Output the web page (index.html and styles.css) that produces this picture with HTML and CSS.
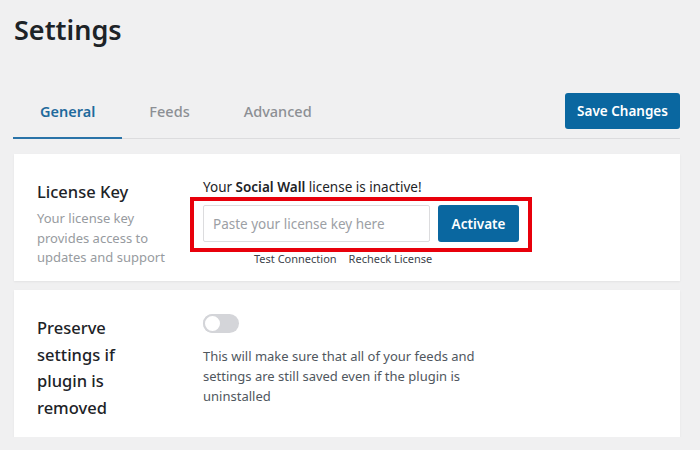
FILE: index.html
```html
<!DOCTYPE html>
<html>
<head>
<meta charset="utf-8">
<link rel="stylesheet" href="styles.css">
</head>
<body>
<div class="page">
  <h1 class="title">Settings</h1>
  <div class="tabbar">
    <nav class="tabs">
      <a class="tab active">General</a>
      <a class="tab">Feeds</a>
      <a class="tab">Advanced</a>
    </nav>
    <button class="btn save">Save Changes</button>
  </div>

  <section class="card card-license">
    <div class="label">
      <h2 class="label-title">License Key</h2>
      <p class="label-desc">Your license key provides access to updates and support</p>
    </div>
    <div class="field">
      <p class="status">Your <b>Social Wall</b> license is inactive!</p>
      <div class="highlight">
        <input class="key-input" type="text" placeholder="Paste your license key here">
        <button class="btn activate">Activate</button>
      </div>
      <div class="links">
        <a class="link">Test Connection</a>
        <a class="link">Recheck License</a>
      </div>
    </div>
  </section>

  <section class="card card-preserve">
    <div class="label">
      <h2 class="label-title tall">Preserve settings if plugin is removed</h2>
    </div>
    <div class="field">
      <span class="toggle"><span class="knob"></span></span>
      <p class="help">This will make sure that all of your feeds and settings are still saved even if the plugin is uninstalled</p>
    </div>
  </section>
</div>
</body>
</html>
```

FILE: styles.css
```css
html, body {
  margin: 0;
  padding: 0;
  background: #f0f0f1;
}
body {
  font-family: "Noto Sans", "Open Sans", sans-serif;
  color: #1d2327;
}
.page {
  padding: 0 20px 0 14px;
}
.title {
  margin: 0;
  padding-top: 10px;
  font-size: 27px;
  font-weight: 600;
  line-height: 40px;
  color: #1d2327;
}
.tabbar {
  margin-top: 35px;
  display: flex;
  justify-content: space-between;
  align-items: flex-start;
  border-bottom: 1px solid #dcdcde;
  height: 53px;
  margin-left: -1px;
}
.tabs {
  display: flex;
  height: 54px;
}
.tab {
  display: block;
  padding: 0 27px 0 27px;
  font-size: 14.5px;
  font-weight: 500;
  line-height: 52px;
  color: #8c8f94;
  border-bottom: 2px solid transparent;
}
.tab.active {
  color: #1f6a9c;
  font-weight: 600;
  border-bottom-color: #2a73a8;
}
.btn {
  font-family: inherit;
  border: none;
  border-radius: 3px;
  background: #0a67a0;
  color: #fff;
  font-weight: 600;
  cursor: pointer;
}
.save {
  margin-top: 8px;
  width: 115px;
  height: 36px;
  font-size: 13.5px;
  padding: 0;
}
.card {
  background: #fff;
  display: flex;
  box-shadow: 0 1px 2px rgba(0, 0, 0, 0.06);
  padding: 0 23px;
}
.card-license {
  margin-top: 15px;
  height: 127px;
}
.card-preserve {
  margin-top: 9px;
  height: 147px;
}
.label {
  width: 130px;
  flex: none;
  margin-right: 36px;
}
.label-title {
  margin: 0;
  font-size: 16.5px;
  font-weight: 500;
  line-height: 24px;
}
.card-license .label-title {
  margin-top: 26px;
}
.label-title.tall {
  margin-top: 25px;
  line-height: 26.5px;
}
.label-desc {
  margin: 5px 0 0;
  font-size: 13px;
  line-height: 19.5px;
  color: #979ba0;
}
.field {
  flex: 1;
}
.status {
  margin: 24px 0 0;
  font-size: 13.5px;
  line-height: 18px;
  color: #1d2327;
}
.status b {
  font-weight: 600;
}
.highlight {
  display: flex;
  width: 316px;
  margin-left: -13px;
  margin-top: 1px;
  border: 4px solid #e8000b;
  padding: 4px 9px 6px 9px;
}
.key-input {
  width: 227px;
  height: 37px;
  box-sizing: border-box;
  border: 1px solid #dcdcde;
  border-radius: 2px;
  padding: 0 9px;
  font-family: inherit;
  font-size: 13.5px;
  color: #1d2327;
  outline: none;
}
.key-input::placeholder {
  color: #9ca0a5;
}
.activate {
  margin-left: 8px;
  width: 81px;
  height: 37px;
  font-size: 13.5px;
  padding: 0;
}
.links {
  display: flex;
  gap: 12px;
  margin-left: 51px;
  margin-top: -1px;
}
.link {
  font-size: 11px;
  line-height: 16px;
  color: #3c434a;
}
.toggle {
  display: block;
  margin-top: 24px;
  width: 36px;
  height: 19px;
  border-radius: 10px;
  background: #d4d5d9;
  position: relative;
}
.knob {
  position: absolute;
  left: 0;
  top: 0;
  width: 15px;
  height: 15px;
  border-radius: 50%;
  background: #fff;
  border: 2px solid #d4d5d9;
}
.help {
  margin: 13px 0 0;
  max-width: 275px;
  font-size: 13px;
  line-height: 20px;
  color: #50575e;
}
```
